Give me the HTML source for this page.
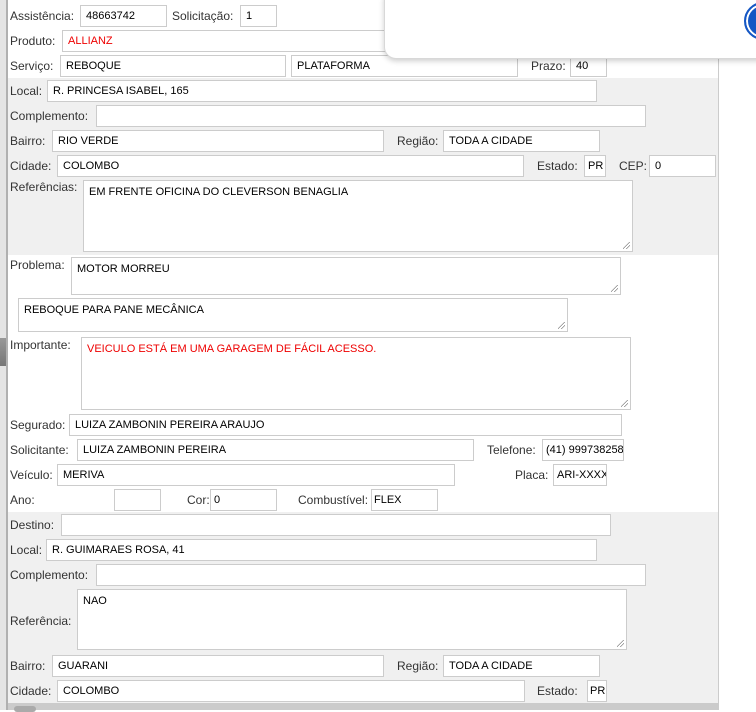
<!DOCTYPE html>
<html><head><meta charset="utf-8"><style>
*{box-sizing:border-box;margin:0;padding:0}
body{width:756px;height:710px;overflow:hidden;background:#fff;font-family:"Liberation Sans","DejaVu Sans",sans-serif;font-size:12px;color:#333;position:relative}
.a{position:absolute}
.l{position:absolute;line-height:14px;color:#333}
.i{position:absolute;height:22px;border:1px solid #ccc;background:#fff;color:#000;font-size:11px;line-height:20px;padding-left:5px;white-space:nowrap;overflow:hidden}
.t{position:absolute;border:1px solid #ccc;background:#fff;color:#000;font-size:11px;padding:5px 0 0 5px;white-space:nowrap;overflow:hidden}
.t:after{content:"";position:absolute;right:2px;bottom:2px;width:7px;height:7px;background:linear-gradient(135deg,transparent 45%,#888 45%,#888 52%,transparent 52%,transparent 70%,#888 70%,#888 77%,transparent 77%)}
</style></head><body>
<div class="a" style="left:0;top:0;width:6px;height:710px;background:#e4e4e4"></div>
<div class="a" style="left:0;top:338px;width:6px;height:28px;background:linear-gradient(#999,#777)"></div>
<div class="a" style="left:6px;top:0;width:2px;height:710px;background:#b0b0b0"></div>
<div class="a" style="left:718px;top:0;width:1px;height:703px;background:#ccc"></div>
<div class="a" style="left:8px;top:78px;width:710px;height:177px;background:#f0f0f0"></div>
<div class="a" style="left:8px;top:512px;width:710px;height:191px;background:#f0f0f0"></div>
<div class="a" style="left:8px;top:703px;width:711px;height:7px;background:#cbcbcb"></div>
<div class="a" style="left:14px;top:706px;width:22px;height:6px;background:#aaa;border-radius:3px"></div>

<div class="l" style="left:10px;top:9px">Assistência:</div><div class="i" style="left:80px;top:5px;width:87px">48663742</div>
<div class="l" style="left:172px;top:9px">Solicitação:</div><div class="i" style="left:240px;top:5px;width:37px">1</div>
<div class="l" style="left:10px;top:34px">Produto:</div><div class="i" style="left:62px;top:30px;width:650px;color:#e00">ALLIANZ</div>
<div class="l" style="left:10px;top:59px">Serviço:</div><div class="i" style="left:60px;top:55px;width:226px">REBOQUE</div>
<div class="i" style="left:291px;top:55px;width:227px">PLATAFORMA</div>
<div class="l" style="left:531px;top:59px">Prazo:</div><div class="i" style="left:570px;top:55px;width:37px">40</div>

<div class="l" style="left:10px;top:84px">Local:</div><div class="i" style="left:47px;top:80px;width:550px">R. PRINCESA ISABEL, 165</div>
<div class="l" style="left:10px;top:109px">Complemento:</div><div class="i" style="left:96px;top:105px;width:550px"></div>
<div class="l" style="left:10px;top:134px">Bairro:</div><div class="i" style="left:52px;top:130px;width:332px">RIO VERDE</div>
<div class="l" style="left:397px;top:134px">Região:</div><div class="i" style="left:443px;top:130px;width:157px">TODA A CIDADE</div>
<div class="l" style="left:10px;top:159px">Cidade:</div><div class="i" style="left:57px;top:155px;width:467px">COLOMBO</div>
<div class="l" style="left:537px;top:159px">Estado:</div><div class="i" style="left:584px;top:155px;width:22px;padding-left:3px">PR</div>
<div class="l" style="left:619px;top:159px">CEP:</div><div class="i" style="left:649px;top:155px;width:67px">0</div>
<div class="l" style="left:10px;top:180px">Referências:</div><div class="t" style="left:83px;top:180px;width:550px;height:72px">EM FRENTE OFICINA DO CLEVERSON BENAGLIA</div>

<div class="l" style="left:10px;top:258px">Problema:</div><div class="t" style="left:71px;top:257px;width:550px;height:38px">MOTOR MORREU</div>
<div class="t" style="left:18px;top:298px;width:550px;height:34px">REBOQUE PARA PANE MECÂNICA</div>
<div class="l" style="left:10px;top:338px">Importante:</div><div class="t" style="left:81px;top:337px;width:550px;height:73px;color:#e00">VEICULO ESTÁ EM UMA GARAGEM DE FÁCIL ACESSO.</div>

<div class="l" style="left:10px;top:418px">Segurado:</div><div class="i" style="left:69px;top:414px;width:553px">LUIZA ZAMBONIN PEREIRA ARAUJO</div>
<div class="l" style="left:10px;top:443px">Solicitante:</div><div class="i" style="left:77px;top:439px;width:397px">LUIZA ZAMBONIN PEREIRA</div>
<div class="l" style="left:487px;top:443px">Telefone:</div><div class="i" style="left:542px;top:439px;width:82px;padding-left:3px">(41) 999738258</div>
<div class="l" style="left:10px;top:468px">Veículo:</div><div class="i" style="left:57px;top:464px;width:398px">MERIVA</div>
<div class="l" style="left:515px;top:468px">Placa:</div><div class="i" style="left:553px;top:464px;width:54px;padding-left:3px">ARI-XXXX</div>
<div class="l" style="left:10px;top:493px">Ano:</div><div class="i" style="left:114px;top:489px;width:47px"></div>
<div class="l" style="left:187px;top:493px">Cor:</div><div class="i" style="left:210px;top:489px;width:67px;padding-left:3px">0</div>
<div class="l" style="left:298px;top:493px">Combustível:</div><div class="i" style="left:371px;top:489px;width:67px;padding-left:2px">FLEX</div>

<div class="l" style="left:10px;top:518px">Destino:</div><div class="i" style="left:61px;top:514px;width:550px"></div>
<div class="l" style="left:10px;top:543px">Local:</div><div class="i" style="left:46px;top:539px;width:551px">R. GUIMARAES ROSA, 41</div>
<div class="l" style="left:10px;top:568px">Complemento:</div><div class="i" style="left:96px;top:564px;width:550px"></div>
<div class="l" style="left:10px;top:614px">Referência:</div><div class="t" style="left:77px;top:589px;width:550px;height:61px">NAO</div>
<div class="l" style="left:10px;top:659px">Bairro:</div><div class="i" style="left:52px;top:655px;width:332px">GUARANI</div>
<div class="l" style="left:397px;top:659px">Região:</div><div class="i" style="left:443px;top:655px;width:157px">TODA A CIDADE</div>
<div class="l" style="left:10px;top:684px">Cidade:</div><div class="i" style="left:57px;top:680px;width:468px">COLOMBO</div>
<div class="l" style="left:537px;top:684px">Estado:</div><div class="i" style="left:587px;top:680px;width:20px;padding-left:2px">PR</div>

<div class="a" style="left:384px;top:-12px;width:390px;height:71px;background:#fff;border:1px solid #d8d8d8;border-radius:12px;box-shadow:0 2px 6px rgba(0,0,0,.2)"></div>
<div class="a" style="left:744px;top:2px;width:38px;height:38px;border-radius:50%;background:#1557c4;border:2px solid #1557c4;box-shadow:inset 0 0 0 2px #fff"></div>
</body></html>
